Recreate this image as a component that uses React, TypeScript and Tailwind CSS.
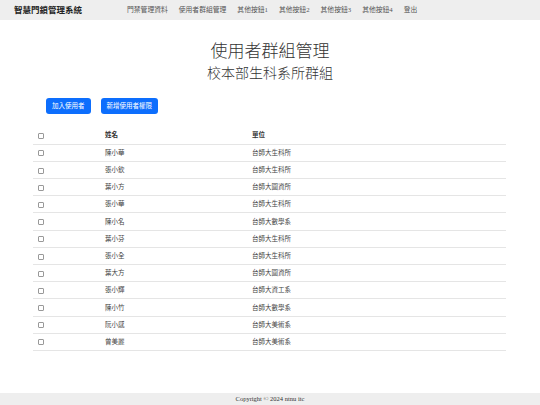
import React from "react";

const serif = { fontFamily: '"Liberation Serif", "Noto Sans CJK TC", serif' };
const sans = { fontFamily: '"Liberation Sans", "Noto Sans CJK TC", sans-serif' };

const navItems = ["門禁管理資料", "使用者群組管理", "其他按鈕1", "其他按鈕2", "其他按鈕3", "其他按鈕4", "登出"];

const rows: [string, string][] = [
  ["陳小華", "台師大生科所"],
  ["張小欽", "台師大生科所"],
  ["葉小方", "台師大圖資所"],
  ["張小華", "台師大生科所"],
  ["陳小名", "台師大數學系"],
  ["葉小芬", "台師大生科所"],
  ["張小全", "台師大生科所"],
  ["葉大方", "台師大圖資所"],
  ["張小輝", "台師大資工系"],
  ["陳小竹", "台師大數學系"],
  ["阮小感", "台師大美術系"],
  ["曾美麗", "台師大美術系"],
];

function Box() {
  return <span className="inline-block w-[6px] h-[6px] border border-[#999] rounded-[1px] bg-white align-middle" />;
}

export default function App() {
  return (
    <div className="min-h-[405px] w-[540px] flex flex-col bg-white text-[#212529]" style={serif}>
      <nav className="h-[20px] bg-[#eeeeee] flex items-center pl-[14px]">
        <span className="text-[8.5px] font-bold text-[#222] w-[113px] leading-none">智慧門鎖管理系統</span>
        <div className="flex items-center gap-[11px] text-[6.8px] text-[#555] leading-none">
          {navItems.map((n) => (
            <span key={n}>{n}</span>
          ))}
        </div>
      </nav>

      <main className="flex-1 flex flex-col">
        <div className="flex flex-col items-center pt-[21px]" style={sans}>
          <h1 className="text-[17px] font-light leading-[22px] text-[#333]">使用者群組管理</h1>
          <h2 className="text-[14px] font-light leading-[20px] text-[#333]">校本部生科系所群組</h2>
        </div>

        <div className="flex gap-[10px] pl-[46px] mt-[15px]" style={sans}>
          <button className="h-[16px] px-[6px] bg-[#0d6efd] text-white text-[6.5px] rounded-[3px] leading-none">加入使用者</button>
          <button className="h-[16px] px-[6px] bg-[#0d6efd] text-white text-[6.5px] rounded-[3px] leading-none">新增使用者權限</button>
        </div>

        <table className="mx-[33px] mt-[13px] w-[473px] border-collapse text-[6.5px] text-[#444]" style={serif}>
          <thead>
            <tr className="h-[17.2px] border-b border-[#e5e5e5]">
              <th className="w-[67px] pl-[5px] text-left font-normal"><Box /></th>
              <th className="w-[147px] pl-[5px] text-left font-bold text-[#333]">姓名</th>
              <th className="pl-[5px] text-left font-bold text-[#333]">單位</th>
            </tr>
          </thead>
          <tbody>
            {rows.map(([n, u]) => (
              <tr key={n} className="h-[17.2px] border-b border-[#e5e5e5]">
                <td className="pl-[5px]"><Box /></td>
                <td className="pl-[5px]">{n}</td>
                <td className="pl-[5px]">{u}</td>
              </tr>
            ))}
          </tbody>
        </table>
      </main>

      <footer className="h-[12px] bg-[#eeeeee] flex items-center justify-center text-[6.5px] text-[#333] leading-none">
        Copyright © 2024 ntnu itc
      </footer>
    </div>
  );
}
